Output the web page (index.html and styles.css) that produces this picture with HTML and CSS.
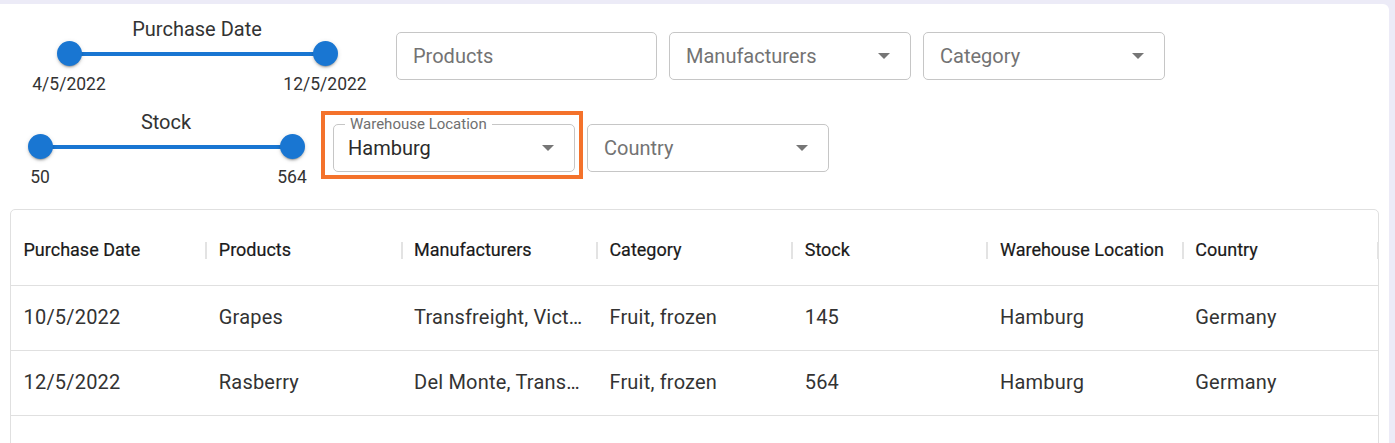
FILE: index.html
```html
<!DOCTYPE html>
<html lang="en">
<head>
<meta charset="utf-8">
<title>Inventory filters</title>
<link rel="stylesheet" href="styles.css">
</head>
<body>
<main class="card">
  <section class="filters">
    <div class="filter-row">
      <div class="range range-date">
        <div class="range-label">Purchase Date</div>
        <div class="range-track">
          <span class="thumb"></span>
          <span class="thumb"></span>
        </div>
        <div class="range-values">
          <span class="val-min">4/5/2022</span>
          <span class="val-max">12/5/2022</span>
        </div>
      </div>
      <div class="fields">
        <div class="field field-wide"><span class="placeholder">Products</span></div>
        <div class="field select"><span class="placeholder">Manufacturers</span><span class="arrow"></span></div>
        <div class="field select"><span class="placeholder">Category</span><span class="arrow"></span></div>
      </div>
    </div>
    <div class="filter-row">
      <div class="range range-stock">
        <div class="range-label">Stock</div>
        <div class="range-track">
          <span class="thumb"></span>
          <span class="thumb"></span>
        </div>
        <div class="range-values">
          <span class="val-min">50</span>
          <span class="val-max">564</span>
        </div>
      </div>
      <div class="fields fields-up">
        <div class="field select highlighted">
          <span class="notch-label">Warehouse Location</span>
          <span class="value">Hamburg</span><span class="arrow"></span>
        </div>
        <div class="field select"><span class="placeholder">Country</span><span class="arrow"></span></div>
      </div>
    </div>
  </section>

  <section class="grid">
    <div class="grid-row grid-head">
      <div class="cell">Purchase Date</div>
      <div class="cell">Products</div>
      <div class="cell">Manufacturers</div>
      <div class="cell">Category</div>
      <div class="cell">Stock</div>
      <div class="cell">Warehouse Location</div>
      <div class="cell">Country</div>
    </div>
    <div class="grid-row">
      <div class="cell">10/5/2022</div>
      <div class="cell">Grapes</div>
      <div class="cell">Transfreight, Victoria Fruit</div>
      <div class="cell">Fruit, frozen</div>
      <div class="cell">145</div>
      <div class="cell">Hamburg</div>
      <div class="cell">Germany</div>
    </div>
    <div class="grid-row">
      <div class="cell">12/5/2022</div>
      <div class="cell">Rasberry</div>
      <div class="cell">Del Monte, Transfreight</div>
      <div class="cell">Fruit, frozen</div>
      <div class="cell">564</div>
      <div class="cell">Hamburg</div>
      <div class="cell">Germany</div>
    </div>
  </section>
</main>
</body>
</html>
```

FILE: styles.css
```css
* { box-sizing: border-box; }

html, body {
  margin: 0;
  padding: 0;
  background: #ecebf7;
  overflow: hidden;
}

body {
  font-family: Roboto, "Liberation Sans", Arial, sans-serif;
  color: #2b2b2b;
}

.card {
  margin: 4px 6px 0 0;
  background: #ffffff;
  border-radius: 0 6px 0 0;
  padding: 13px 10px 0 10px;
  min-height: 600px;
}

.filters {
  display: flex;
  flex-direction: column;
  gap: 15px;
}

.filter-row {
  display: flex;
  align-items: center;
}

.range {
  display: flex;
  flex-direction: column;
  flex: none;
}

.range-date { width: 256px; margin: 0 71px 0 59px; }
.range-stock { width: 252px; margin: 0 41px 0 30px; }

.range-label {
  font-size: 20px;
  line-height: 24px;
  text-align: center;
  color: #333;
}

.range-track {
  height: 25px;
  display: flex;
  justify-content: space-between;
  align-items: center;
  margin: 0 -12.5px;
  background: linear-gradient(#1976d2, #1976d2) no-repeat center / calc(100% - 25px) 4px;
}

.thumb {
  width: 25px;
  height: 25px;
  border-radius: 50%;
  background: #1976d2;
  box-shadow: 0 3px 1px -2px rgba(0,0,0,0.2), 0 2px 2px 0 rgba(0,0,0,0.14), 0 1px 5px 0 rgba(0,0,0,0.12);
}

.range-values {
  margin-top: 8px;
  display: flex;
  justify-content: space-between;
  font-size: 17.5px;
  line-height: 21px;
  color: #333;
  white-space: nowrap;
}

.val-min { transform: translateX(-50%); }
.val-max { transform: translateX(50%); }

.fields {
  display: flex;
  gap: 12px;
}

.fields-up { margin-top: -2px; }

.field {
  position: relative;
  width: 242px;
  height: 48px;
  border: 1px solid #c6c6c6;
  border-radius: 5px;
  display: flex;
  align-items: center;
  padding: 0 20px 0 16px;
  font-size: 20px;
}

.field-wide { width: 261px; }

.placeholder { color: #737373; flex: 1; }
.value { color: #2b2b2b; flex: 1; }

.arrow {
  width: 0;
  height: 0;
  border-left: 6.25px solid transparent;
  border-right: 6.25px solid transparent;
  border-top: 6.25px solid #767676;
}

.notch-label {
  position: absolute;
  top: -10px;
  left: 11px;
  padding: 0 5px;
  background: #fff;
  font-size: 15px;
  line-height: 18px;
  color: #707070;
}

.highlighted { padding-left: 14px; }

.highlighted::after {
  content: "";
  position: absolute;
  top: -14px;
  left: -13px;
  right: -9px;
  bottom: -8px;
  border: 4px solid #f4722b;
  pointer-events: none;
}

.grid {
  margin-top: 21px;
  border: 1px solid #e0e0e0;
  border-radius: 5px;
  min-height: 300px;
}

.grid-row {
  display: grid;
  grid-template-columns: repeat(7, 195.3px);
  height: 65px;
  border-bottom: 1px solid #e0e0e0;
}

.grid-head {
  height: 76px;
  color: #1a1a1a;
}

.cell {
  position: relative;
  display: flex;
  align-items: center;
  padding: 0 12.5px;
  font-size: 20px;
  white-space: nowrap;
  overflow: hidden;
  min-width: 0;
}

.grid-row:not(.grid-head) .cell {
  display: block;
  line-height: 63px;
  text-overflow: ellipsis;
  letter-spacing: 0.2px;
  color: #333;
}

.grid-head .cell {
  padding-top: 4px;
  overflow: visible;
  font-size: 18px;
  font-weight: 400;
  -webkit-text-stroke: 0.2px #1a1a1a;
}

.grid-head .cell::after {
  content: "";
  position: absolute;
  right: -1px;
  top: 50%;
  margin-top: -6px;
  width: 2px;
  height: 17px;
  background: #e3e3e3;
}
```
